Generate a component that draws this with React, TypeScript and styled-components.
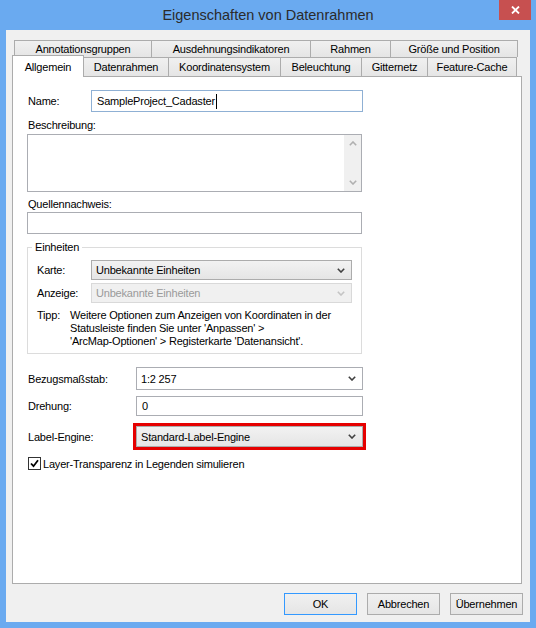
import styled, { createGlobalStyle } from "styled-components";

const GlobalStyle = createGlobalStyle`
  html, body {
    margin: 0;
    padding: 0;
  }
  body {
    background: #6aaaf0;
    font-family: "Liberation Sans", Arial, sans-serif;
  }
`;

const Frame = styled.div`
  width: 536px;
  height: 628px;
  box-sizing: border-box;
  padding: 0 6px 6px;
  background: #6aaaf0;

  display: flex;
  flex-direction: column;
`;

const TitleBar = styled.div`
  position: relative;
  height: 30px;
  flex-shrink: 0;

  display: flex;
  align-items: center;
  justify-content: center;

  font-size: 14.5px;
  color: #2b2b2b;
`;

const CloseButton = styled.div`
  position: absolute;
  top: 0;
  right: -1px;
  width: 32px;
  height: 20px;
  background: #c75050;

  display: flex;
  align-items: center;
  justify-content: center;
`;

const Client = styled.div`
  flex: 1;
  background: #f0f0f0;
  padding-top: 10px;

  display: flex;
  flex-direction: column;
  font-size: 11px;
  letter-spacing: -0.2px;
  color: #000;
`;

const TabRow = styled.div<{ $indent: number; $height: number }>`
  display: flex;
  align-items: flex-end;
  margin-left: ${(p) => p.$indent}px;
  height: ${(p) => p.$height}px;
`;

const Tab = styled.div<{ $width: number; $active?: boolean }>`
  width: ${(p) => p.$width}px;
  height: ${(p) => (p.$active ? 22 : 100)}${(p) => (p.$active ? "px" : "%")};
  box-sizing: border-box;
  margin-left: -1px;
  margin-bottom: ${(p) => (p.$active ? -1 : 0)}px;
  border: 1px solid #acacac;
  border-bottom: none;
  background: ${(p) => (p.$active ? "#ffffff" : "linear-gradient(#f0f0f0, #e5e5e5)")};
  position: ${(p) => (p.$active ? "relative" : "static")};
  z-index: ${(p) => (p.$active ? 2 : "auto")};

  display: flex;
  align-items: center;
  justify-content: center;
  white-space: nowrap;

  &:first-child {
    margin-left: 0;
  }
`;

const Panel = styled.div`
  margin-left: 6px;
  width: 510px;
  height: 508px;
  box-sizing: border-box;
  border: 1px solid #acacac;
  background: #ffffff;
  padding: 13px 0 0 14px;

  display: flex;
  flex-direction: column;
`;

const Row = styled.div<{ $top?: number }>`
  display: flex;
  align-items: center;
  margin-top: ${(p) => p.$top ?? 0}px;
`;

const Label = styled.div<{ $width?: number }>`
  width: ${(p) => (p.$width ? `${p.$width}px` : "auto")};
  flex-shrink: 0;
  padding-left: 1px;
  line-height: 14px;
`;

const Caption = styled.div<{ $top?: number }>`
  margin-top: ${(p) => p.$top ?? 0}px;
  padding-left: 1px;
  line-height: 14px;
`;

const TextBox = styled.div<{ $width: number; $height: number; $focused?: boolean }>`
  width: ${(p) => p.$width}px;
  height: ${(p) => p.$height}px;
  box-sizing: border-box;
  border: 1px solid ${(p) => (p.$focused ? "#8fb0d4" : "#abadb3")};
  background: #ffffff;
  padding-left: 5px;

  display: flex;
  align-items: center;
  white-space: nowrap;
`;

const Caret = styled.span`
  display: inline-block;
  width: 1px;
  height: 15px;
  margin-left: 1px;
  background: #000;
`;

const MemoBox = styled.div`
  margin-top: 2px;
  width: 335px;
  height: 58px;
  box-sizing: border-box;
  border: 1px solid #abadb3;
  background: #ffffff;

  display: flex;
  justify-content: flex-end;
`;

const ScrollTrack = styled.div`
  width: 17px;
  background: #f0f0f0;

  display: flex;
  flex-direction: column;
  justify-content: space-between;
  align-items: center;
  padding: 6px 0;
  box-sizing: border-box;
`;

const DropDown = styled.div<{ $width: number; $height: number; $disabled?: boolean; $highlight?: boolean }>`
  width: ${(p) => p.$width}px;
  height: ${(p) => p.$height}px;
  box-sizing: border-box;
  border: 1px solid ${(p) => (p.$disabled ? "#d9d9d9" : "#acacac")};
  background: ${(p) => (p.$disabled ? "#f0f0f0" : "linear-gradient(#f2f2f2, #e5e5e5)")};
  color: ${(p) => (p.$disabled ? "#9a9a9a" : "#000")};
  padding: 0 6px 0 4px;
  outline: ${(p) => (p.$highlight ? "3px solid #e50000" : "none")};

  display: flex;
  align-items: center;
  justify-content: space-between;
  white-space: nowrap;
`;

const ComboBox = styled(DropDown)`
  background: #ffffff;
  border-color: #abadb3;
`;

const GroupBox = styled.fieldset`
  margin: 6px 0 0;
  width: 335px;
  min-width: 0;
  box-sizing: border-box;
  border: 1px solid #dcdcdc;
  padding: 6px 9px 5px 8px;

  display: flex;
  flex-direction: column;
`;

const GroupTitle = styled.legend`
  padding: 0 3px;
  margin-left: -4px;
  line-height: 14px;
`;

const Hint = styled.div`
  margin-top: 6px;
  display: flex;
  line-height: 13px;
`;

const HintTag = styled.div`
  width: 33px;
  flex-shrink: 0;
  padding-left: 1px;
`;

const CheckRow = styled.div`
  margin-top: 10px;
  display: flex;
  align-items: center;
  gap: 2px;
  padding-left: 1px;
`;

const CheckBox = styled.div`
  width: 13px;
  height: 13px;
  box-sizing: border-box;
  border: 1px solid #333333;
  background: #ffffff;

  display: flex;
  align-items: center;
  justify-content: center;
`;

const ButtonBar = styled.div`
  margin-top: 9px;
  padding-right: 7px;

  display: flex;
  justify-content: flex-end;
  gap: 10px;
`;

const Button = styled.div<{ $default?: boolean }>`
  width: 73px;
  height: 22px;
  box-sizing: border-box;
  border: 1px solid ${(p) => (p.$default ? "#3399ff" : "#acacac")};
  background: linear-gradient(#f0f0f0, #e5e5e5);

  display: flex;
  align-items: center;
  justify-content: center;
`;

const Chevron = ({ color = "#404040", up = false }: { color?: string; up?: boolean }) => (
  <svg width="8" height="5" viewBox="0 0 8 5">
    <polyline
      points={up ? "0.8,4.2 4,1 7.2,4.2" : "0.8,0.8 4,4 7.2,0.8"}
      fill="none"
      stroke={color}
      strokeWidth="1.6"
    />
  </svg>
);

const topTabs: [string, number][] = [
  ["Annotationsgruppen", 138],
  ["Ausdehnungsindikatoren", 160],
  ["Rahmen", 81],
  ["Größe und Position", 128],
];

const bottomTabs: [string, number][] = [
  ["Allgemein", 72],
  ["Datenrahmen", 86],
  ["Koordinatensystem", 113],
  ["Beleuchtung", 82],
  ["Gitternetz", 67],
  ["Feature-Cache", 90],
];

const App = () => {
  return (
    <Frame>
      <GlobalStyle />
      <TitleBar>
        Eigenschaften von Datenrahmen
        <CloseButton>
          <svg width="9" height="8" viewBox="0 0 9 8">
            <path d="M1 0.5 L8 7.5 M8 0.5 L1 7.5" stroke="#ffffff" strokeWidth="1.8" />
          </svg>
        </CloseButton>
      </TitleBar>

      <Client>
        <TabRow $indent={8} $height={17}>
          {topTabs.map(([title, width]) => (
            <Tab key={title} $width={width}>{title}</Tab>
          ))}
        </TabRow>
        <TabRow $indent={6} $height={19}>
          {bottomTabs.map(([title, width], i) => (
            <Tab key={title} $width={width} $active={i === 0}>{title}</Tab>
          ))}
        </TabRow>

        <Panel>
          <Row>
            <Label $width={63}>Name:</Label>
            <TextBox $width={272} $height={22} $focused>
              SampleProject_Cadaster<Caret />
            </TextBox>
          </Row>

          <Caption $top={6}>Beschreibung:</Caption>
          <MemoBox>
            <ScrollTrack>
              <Chevron color="#b0b0b0" up />
              <Chevron color="#b0b0b0" />
            </ScrollTrack>
          </MemoBox>

          <Caption $top={5}>Quellennachweis:</Caption>
          <TextBox $width={335} $height={22} style={{ marginTop: 1 }} />

          <GroupBox>
            <GroupTitle>Einheiten</GroupTitle>
            <Row>
              <Label $width={54}>Karte:</Label>
              <DropDown $width={262} $height={20}>
                Unbekannte Einheiten
                <Chevron />
              </DropDown>
            </Row>
            <Row $top={3}>
              <Label $width={54}>Anzeige:</Label>
              <DropDown $width={262} $height={20} $disabled>
                Unbekannte Einheiten
                <Chevron color="#c4c4c4" />
              </DropDown>
            </Row>
            <Hint>
              <HintTag>Tipp:</HintTag>
              <div>
                Weitere Optionen zum Anzeigen von Koordinaten in der
                <br />
                Statusleiste finden Sie unter 'Anpassen' &gt;
                <br />
                'ArcMap-Optionen' &gt; Registerkarte 'Datenansicht'.
              </div>
            </Hint>
          </GroupBox>

          <Row $top={13}>
            <Label $width={108}>Bezugsmaßstab:</Label>
            <ComboBox $width={227} $height={23}>
              1:2 257
              <Chevron />
            </ComboBox>
          </Row>
          <Row $top={6}>
            <Label $width={108}>Drehung:</Label>
            <TextBox $width={227} $height={20}>0</TextBox>
          </Row>
          <Row $top={10}>
            <Label $width={108}>Label-Engine:</Label>
            <DropDown $width={227} $height={21} $highlight>
              Standard-Label-Engine
              <Chevron />
            </DropDown>
          </Row>

          <CheckRow>
            <CheckBox>
              <svg width="9" height="9" viewBox="0 0 9 9">
                <path d="M1 4.5 L3.5 7.2 L8 1.2" fill="none" stroke="#000" strokeWidth="1.8" />
              </svg>
            </CheckBox>
            Layer-Transparenz in Legenden simulieren
          </CheckRow>
        </Panel>

        <ButtonBar>
          <Button $default>OK</Button>
          <Button>Abbrechen</Button>
          <Button>Übernehmen</Button>
        </ButtonBar>
      </Client>
    </Frame>
  );
};

export default App;
